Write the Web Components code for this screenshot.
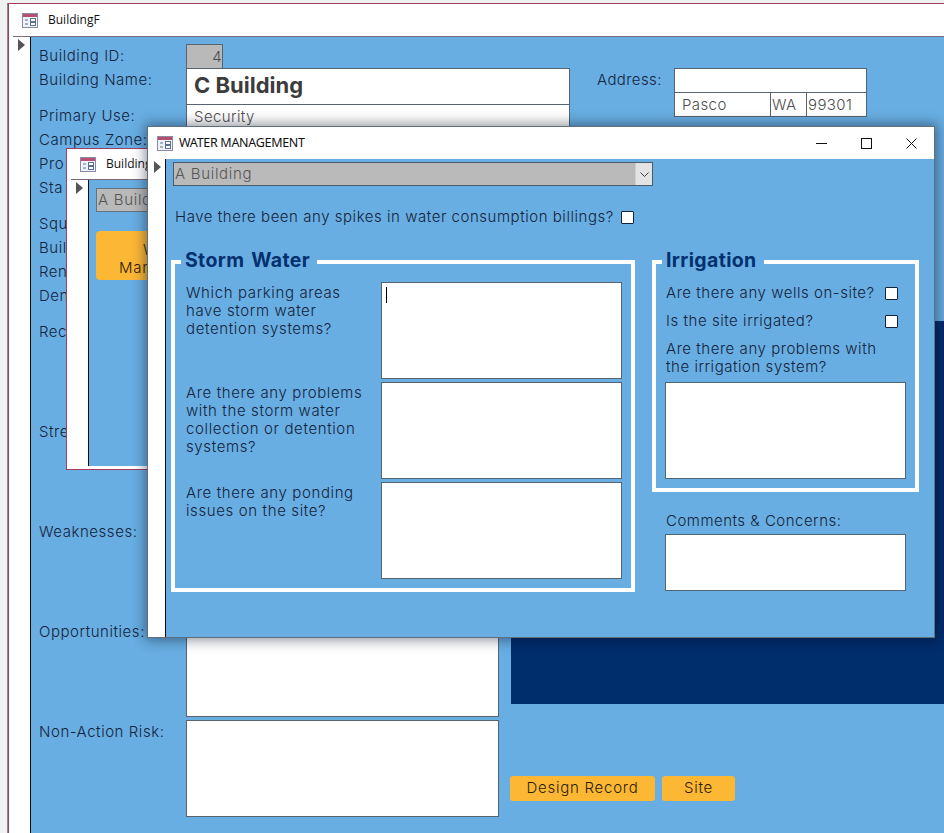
<!DOCTYPE html>
<html><head><meta charset="utf-8">
<style>
html,body{margin:0;padding:0;width:944px;height:833px;overflow:hidden;background:#f0f1f1}
body{position:relative;font-family:Inter,"Liberation Sans",sans-serif;font-size:15px;color:#14233c}
#back{left:8px;top:3px;width:960px;height:840px;z-index:1;--tb:33px;--sw:21px;--tl:1px;--lead:4px;--tri:3px;box-shadow:-1px 0 0 #8c8c8c}
#mid{left:66px;top:148px;width:96px;height:322px;z-index:2;--tb:31px;--sw:21px;--tl:1px;--lead:4px;--pb:3px;--ts:12px;--tx:10px;--tri:3px}
#top{left:147px;top:126px;width:788px;height:512px;z-index:3;--tb:32px;--sw:17px;--tl:0px;--lead:0px;--ts:12.5px;--tx:10px}
</style></head><body>
<template id="t-win"><style>
:host{position:absolute;display:flex;flex-direction:column;box-sizing:border-box;background:#fff;border:1px solid #a33d5c}
:host([float]){border-color:#5f6f7c;box-shadow:0 0 12px 2px rgba(0,10,30,.45)}
.tb{height:var(--tb);flex:none;box-sizing:border-box;display:flex;align-items:center;padding-left:9px;margin-left:var(--lead);border-bottom:var(--tl) solid #7b6a78;font:var(--ts,12px)/16px "Open Sans","Liberation Sans",sans-serif;color:#111;white-space:nowrap}
:host([float]) .tb{font-family:"Noto Sans","Open Sans",sans-serif;letter-spacing:-.3px}
svg.i{flex:none;margin-right:var(--tx,10px)}
:host([float]) svg.i{margin-right:6px}
.main{flex:1;display:flex;min-height:0;padding-bottom:var(--pb,0)}
.sel{width:var(--sw);flex:none;border-right:1px solid #0b0b0b;display:flex;justify-content:center;padding-top:2px}
.sel svg{margin-left:var(--tri,1px)}
.body{flex:1;background:#68aee2;min-width:0;overflow:hidden}
:host([float]) .body{overflow:visible}
</style>
<div class="tb"><svg class="i" width="16" height="15" viewBox="0 0 16 15"><rect x=".5" y=".5" width="15" height="14" fill="#eef2fa" stroke="#8c88a8"/><rect x="1" y="1" width="14" height="3" fill="#b5516f"/><path d="M3 7h3M3 11h3" stroke="#5c6f94"/><rect x="8.5" y="5.5" width="5" height="3" fill="#fff" stroke="#5c6f94"/><rect x="8.5" y="9.5" width="5" height="3" fill="#fff" stroke="#5c6f94"/></svg><span id="tt"></span><slot name="ctl"></slot></div>
<div class="main"><div class="sel"><svg width="7" height="12" viewBox="0 0 7 12"><path d="M0 0l7 6-7 6z" fill="#555"/></svg></div><div class="body"><slot></slot></div></div>
</template>

<template id="t-ctl"><style>:host{display:flex;margin-left:auto;align-items:center;margin-right:17px;gap:34px}svg{display:block}</style>
<svg width="11" height="11" viewBox="0 0 11 11"><path d="M0 5.5h11" stroke="#111"/></svg>
<svg width="11" height="11" viewBox="0 0 11 11"><rect x=".5" y=".5" width="10" height="10" fill="none" stroke="#111"/></svg>
<svg width="11" height="11" viewBox="0 0 11 11"><path d="M.5.5l10 10M10.5.5l-10 10" stroke="#111"/></svg>
</template>

<template id="t-box"><style>
:host{display:block;box-sizing:border-box;background:#fff;border:1px solid #56646f;overflow:hidden;white-space:nowrap;color:#4e4e4e;font-weight:300;letter-spacing:.4px;padding:0 7px;position:relative}
:host([gray]){background:#b9b9b9}
:host([num]){text-align:right;padding-right:0}
:host([bold]){font-weight:700;font-size:22px;color:#3c3c3c;letter-spacing:0}
.c{display:none;position:absolute;left:4px;top:4px;width:1px;height:16px;background:#000}
:host([caret]) .c{display:block}
</style><slot></slot><i class="c"></i></template>

<template id="t-check"><style>:host{display:block;flex:none;width:13px;height:13px;box-sizing:border-box;background:#fff;border:1px solid #14233c;border-radius:1px}</style></template>

<template id="t-row"><style>
:host{display:flex;height:var(--h,24px);flex:none}
.lb{flex:none;width:147px;font-weight:300;letter-spacing:.55px;line-height:24px;white-space:nowrap;overflow:hidden}
.ct{flex:1;min-width:0;display:block}
</style><div class="lb"><slot name="label"></slot></div><div class="ct"><slot></slot></div></template>

<template id="t-btn"><style>
:host{display:flex;align-items:center;justify-content:center;box-sizing:border-box;background:#fcb735;border-radius:3px;color:#2c1d07;font-weight:300;letter-spacing:.75px;line-height:18px;white-space:nowrap;height:25px;padding-bottom:1px}
</style><slot></slot></template>

<template id="t-group"><style>
:host{display:block;position:relative;box-sizing:border-box;border:4px solid #fff;flex:none}
.lg{position:absolute;left:6px;top:-15px;background:#68aee2;font-size:19.5px;line-height:22px;font-weight:700;color:#03306f;padding:0 7px 0 4px;letter-spacing:.35px;word-spacing:2px;white-space:nowrap}
</style><div class="lg" id="lg"></div><slot></slot></template>

<template id="t-combo"><style>
:host{display:flex;box-sizing:border-box;height:24px;width:480px;border:1px solid #4d5b68;background:#bababa;color:#565656;font-weight:300;letter-spacing:.7px;line-height:22px;padding-left:1px;white-space:nowrap;overflow:hidden}
.t{flex:1}.b{width:16px;flex:none;background:#e3e3e3;display:flex;align-items:center;justify-content:center;border-left:1px solid #cfcfcf}
:host([plain]) .b{display:none}
</style><span class="t"><slot></slot></span><span class="b"><svg width="9" height="5" viewBox="0 0 9 5"><path d="M.5.5l4 4 4-4" fill="none" stroke="#444"/></svg></span></template>

<script>
function mk(name,tpl,onConnect){customElements.define(name,class extends HTMLElement{constructor(){super();const r=this.attachShadow({mode:'open'});r.appendChild(document.getElementById(tpl).content.cloneNode(true))}connectedCallback(){if(onConnect)onConnect(this,this.shadowRoot)}})}
mk('mdi-window','t-win',(h,r)=>{r.getElementById('tt').textContent=h.getAttribute('caption')||''});
mk('win-controls','t-ctl');
mk('field-box','t-box');
mk('check-box','t-check');
mk('form-row','t-row');
mk('gold-button','t-btn');
mk('group-frame','t-group',(h,r)=>{r.getElementById('lg').textContent=h.getAttribute('legend')});
mk('combo-field','t-combo');
</script>

<mdi-window id="back" caption="BuildingF">
 <back-form></back-form>
</mdi-window>

<mdi-window id="mid" caption="Building">
 <mid-form></mid-form>
</mdi-window>

<mdi-window id="top" float caption="WATER MANAGEMENT">
 <win-controls slot="ctl"></win-controls>
 <water-form></water-form>
</mdi-window>

<script>
class BackForm extends HTMLElement{constructor(){super();this.attachShadow({mode:'open'}).innerHTML=`<style>
:host{display:block;padding:7px 0 0 8px}
.top{display:flex;height:276px}
.left{width:531px;flex:none;display:flex;flex-direction:column}
.sp{height:12px;flex:none}
.addr{display:flex;margin-left:27px;padding-top:24px;align-items:flex-start}
.al{width:77px;font-weight:300;letter-spacing:.4px;line-height:24px}
.ab{width:193px}
.a1{height:25px}
.a2{display:flex;height:25px;margin-top:-1px}
.a2 field-box{height:25px;margin-right:-1px;line-height:23px}
.cols{display:flex}
.boxes{display:flex;flex-direction:column;width:459px;flex:none}
.tall{--h:100px}
.tall field-box{height:97px;width:313px}
.right{margin-left:13px;flex:1;padding-top:1px;min-width:0}
.navy{height:383px;background:#002d6c;display:flex;padding-top:24px;box-sizing:border-box;align-items:flex-start}
.navy i{display:block;margin-left:auto;width:10px;height:23px;background:#bcbcbc}
.btns{display:flex;gap:7px;margin:72px 0 0 -1px}
</style>
<div class="top"><div class="left">
<form-row><span slot="label">Building ID:</span><field-box gray num style="width:37px;height:25px;line-height:23px">4</field-box></form-row>
<form-row style="--h:36px"><span slot="label">Building Name:</span><field-box bold style="height:37px;line-height:33px">C Building</field-box></form-row>
<form-row><span slot="label">Primary Use:</span><field-box style="height:25px;line-height:23px">Security</field-box></form-row>
<form-row><span slot="label">Campus Zone:</span></form-row>
<form-row><span slot="label">Pro</span></form-row>
<form-row><span slot="label">Sta</span></form-row>
<div class="sp"></div>
<form-row><span slot="label">Squ</span></form-row>
<form-row><span slot="label">Buil</span></form-row>
<form-row><span slot="label">Ren</span></form-row>
<form-row><span slot="label">Den</span></form-row>
</div>
<div class="addr"><div class="al">Address:</div><div class="ab"><field-box class="a1"></field-box><div class="a2"><field-box style="width:97px">Pasco</field-box><field-box style="width:37px;padding:0 1px">WA</field-box><field-box style="width:61px;padding:0 1px">99301</field-box></div></div></div>
</div>
<div class="cols"><div class="boxes">
<form-row class="tall"><span slot="label">Rec</span></form-row>
<form-row class="tall"><span slot="label">Stre</span></form-row>
<form-row class="tall"><span slot="label">Weaknesses:</span></form-row>
<form-row class="tall"><span slot="label">Opportunities:</span><field-box></field-box></form-row>
<form-row class="tall"><span slot="label">Non-Action Risk:</span><field-box></field-box></form-row>
</div>
<div class="right"><div class="navy"><i></i></div>
<div class="btns"><gold-button style="width:145px">Design Record</gold-button><gold-button style="width:73px">Site</gold-button></div></div>
</div>`}}
customElements.define('back-form',BackForm);

class MidForm extends HTMLElement{constructor(){super();this.attachShadow({mode:'open'}).innerHTML=`<style>
:host{display:block;padding:8px 0 0 7px}
combo-field{width:200px;border-color:#66727c;background:#b9b9b9}
gold-button{width:136px;height:49px;margin-top:19px;display:block;padding:10px 0 0 0;border-radius:4px;box-sizing:border-box}
span{display:block}
.a{margin-left:47px}.b{margin-left:23px}
</style><combo-field plain>A Build</combo-field><gold-button><span class="a">W</span><span class="b">Man</span></gold-button>`}}
customElements.define('mid-form',MidForm);

class WaterForm extends HTMLElement{constructor(){super();this.attachShadow({mode:'open'}).innerHTML=`<style>
:host{display:block;padding:3px 0 0 5px;font-weight:300;letter-spacing:.54px;line-height:18px}
combo-field{margin-left:2px}
.q{display:flex;justify-content:space-between;align-items:center;width:459px;margin:22px 0 0 4px;height:18px}
.gs{display:flex;margin-top:34px;gap:17px;align-items:flex-start}
.storm{width:464px;height:332px;padding:18px 9px 0 11px;letter-spacing:.62px}
.sr{display:flex;height:97px;margin-bottom:3px;justify-content:space-between}
.sr div{width:190px;padding-top:2px}
.sr field-box{width:241px;height:97px}
.col{width:267px;flex:none}
.irr{width:267px;height:232px;padding:20px 9px 0 10px}
.cr{display:flex;justify-content:space-between;align-items:center;height:18px;margin-bottom:10px;padding-right:8px;white-space:nowrap}
.ta{width:241px;height:97px;margin:6px 0 0 -1px}
.cm{margin:20px 0 0 14px;letter-spacing:.5px}
.cb{width:241px;height:57px;margin:4px 0 0 13px}
</style>
<combo-field>A Building</combo-field>
<div class="q"><span>Have there been any spikes in water consumption billings?</span><check-box></check-box></div>
<div class="gs">
<group-frame class="storm" legend="Storm Water">
<div class="sr"><div>Which parking areas have storm water detention systems?</div><field-box caret></field-box></div>
<div class="sr"><div>Are there any problems with the storm water collection or detention systems?</div><field-box></field-box></div>
<div class="sr"><div>Are there any ponding issues on the site?</div><field-box></field-box></div>
</group-frame>
<div class="col">
<group-frame class="irr" legend="Irrigation">
<div class="cr"><span>Are there any wells on-site?</span><check-box></check-box></div>
<div class="cr"><span>Is the site irrigated?</span><check-box></check-box></div>
<div>Are there any problems with<br>the irrigation system?</div>
<field-box class="ta"></field-box>
</group-frame>
<div class="cm">Comments &amp; Concerns:</div>
<field-box class="cb"></field-box>
</div></div>`}}
customElements.define('water-form',WaterForm);
</script>
</body></html>
